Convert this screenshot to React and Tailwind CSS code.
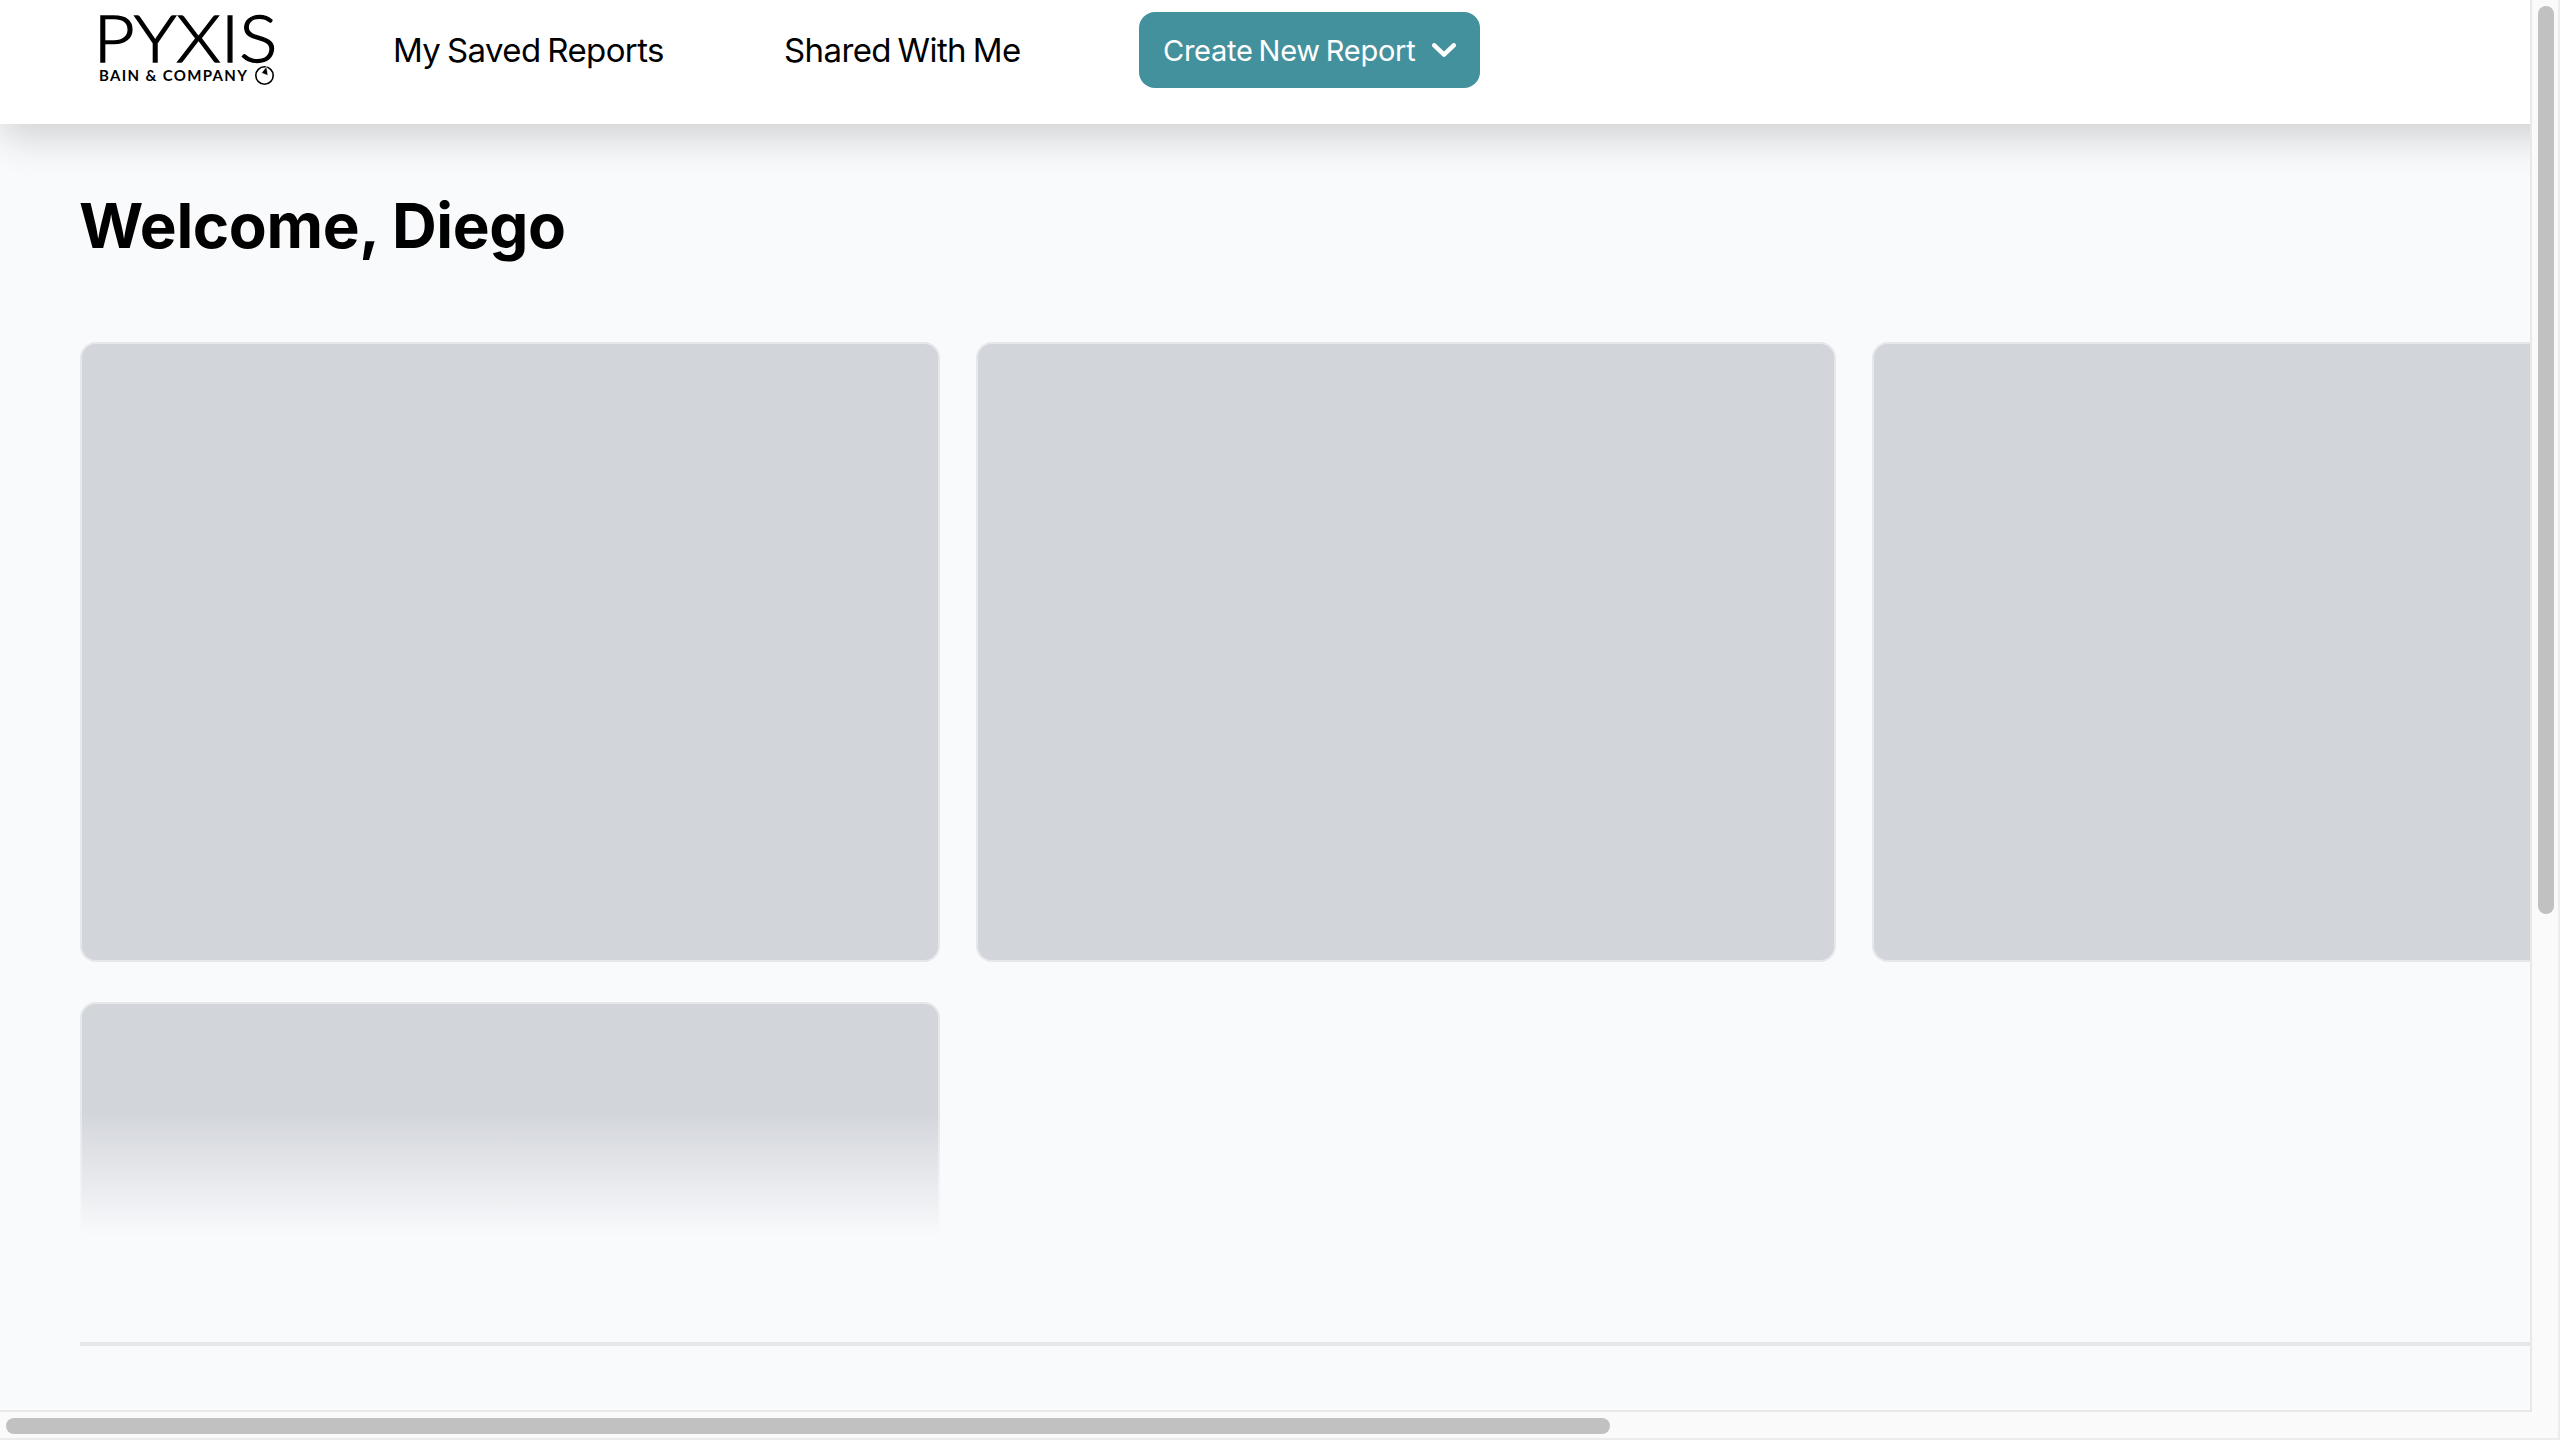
import React from "react";

function Logo() {
  return (
    <svg
      width="180"
      height="76"
      viewBox="0 0 180 76"
      className="shrink-0 overflow-visible"
      role="img"
      aria-label="Pyxis by Bain & Company"
    >
      <text x="-6.5" y="48" fontFamily="Lato" fontWeight="300" fontSize="65" textLength="184" lengthAdjust="spacingAndGlyphs" stroke="#000" strokeWidth="1.3">
        PYXIS
      </text>
      <text x="-1" y="67" fontFamily="Lato" fontWeight="700" fontSize="15" textLength="148" lengthAdjust="spacing">
        BAIN &amp; COMPANY
      </text>
      <circle cx="164.5" cy="61.5" r="8.7" fill="none" stroke="#000" strokeWidth="1.6" />
      <path d="M166.5 52.5 L168 61.5 L161.5 59 Z" stroke="#fff" strokeWidth="0.6" />
    </svg>
  );
}

function Header() {
  return (
    <header className="relative z-10 flex h-[124px] w-[2800px] shrink-0 items-start bg-white pl-[100px] shadow-[0_16px_36px_-2px_rgba(0,0,0,0.16)]">
      <div className="pt-3.5 leading-none">
        <Logo />
      </div>
      <nav className="flex text-[33px] leading-[48px] whitespace-nowrap text-black [word-spacing:-2px]">
        <a className="mt-[26px] ml-[113px] w-[391px] tracking-[-0.6px]">My Saved Reports</a>
        <a className="mt-[26px] w-[355px] tracking-[-0.6px]">Shared With Me</a>
      </nav>
      <button className="mt-3 flex h-[76px] w-[341px] items-center rounded-2xl bg-[#44919e] pl-6 text-[29px] whitespace-nowrap text-white">
        <span className="w-[269px] pt-0.5 text-left tracking-[-0.25px] [word-spacing:-2px]">Create New Report</span>
        <svg width="24" height="14" viewBox="0 0 24 14" fill="none" stroke="currentColor" strokeWidth="4.4" strokeLinecap="round" strokeLinejoin="round">
          <path d="M2.3 2.3 12 11.6 21.7 2.3" />
        </svg>
      </button>
    </header>
  );
}

const cards = [1, 2, 3, 4];

function CardGrid() {
  return (
    <section className="relative mt-[62px] h-[898px] overflow-hidden">
      <div className="grid grid-cols-[860px_860px_860px] gap-x-9 gap-y-10">
        {cards.map((id) => (
          <div key={id} className="h-[620px] rounded-2xl border-2 border-[#e5e7eb] bg-[#d2d5da]" />
        ))}
      </div>
      <div className="absolute inset-x-0 bottom-0 h-32 bg-linear-to-b from-[#f9fafc]/0 to-[#f9fafc] to-97%" />
    </section>
  );
}

export default function App() {
  return (
    <div className="grid h-[1440px] w-[2560px] grid-cols-[2530px_30px] grid-rows-[1410px_30px] overflow-hidden bg-[#fafafa] font-[Inter,sans-serif]">
      <div className="flex flex-col overflow-hidden bg-[#f9fafc]">
        <Header />
        <main className="pl-20">
          <h1 className="mt-[60px] -ml-px h-24 text-[62px] leading-[84px] font-bold tracking-[-0.4px] text-black">
            Welcome, Diego
          </h1>
          <CardGrid />
          <div className="mt-[102px] h-1 bg-[#e5e7eb]" />
        </main>
      </div>
      <div className="border-r-2 border-l-2 border-r-[#ececec] border-l-[#e8e8e8] px-1.5 pt-1.5">
        <div className="h-[908px] w-4 rounded-full bg-[#c1c1c1]" />
      </div>
      <div className="border-t-2 border-b-2 border-t-[#e8e8e8] border-b-[#ececec] py-1.5 pl-1.5">
        <div className="h-4 w-[1604px] rounded-full bg-[#c1c1c1]" />
      </div>
      <div className="flex flex-col border-r-2 border-b-2 border-[#ececec]">
        <div className="h-0.5 w-0.5 bg-[#e8e8e8]" />
      </div>
    </div>
  );
}
